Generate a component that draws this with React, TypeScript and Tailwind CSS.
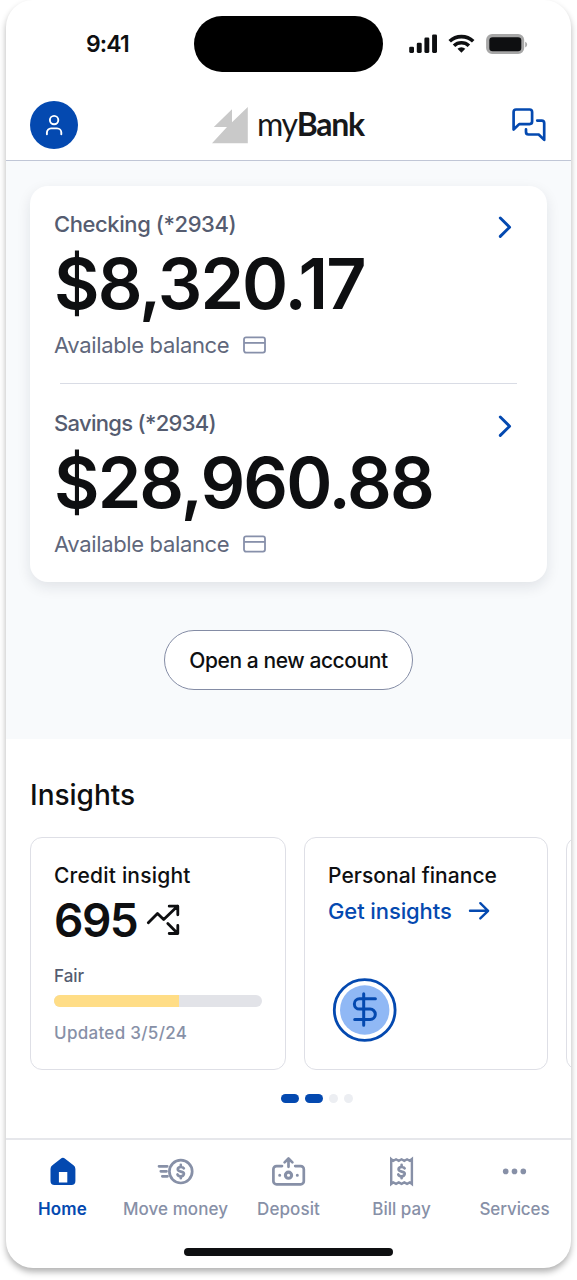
import { ReactNode } from "react";

interface Account {
  name: string;
  balance: string;
  nameClass: string;
}

interface NavItem {
  label: string;
  icon: ReactNode;
  className: string;
}

const accounts: Account[] = [
  { name: "Checking (*2934)", balance: "$8,320.17", nameClass: "tracking-[-0.42px]" },
  { name: "Savings (*2934)", balance: "$28,960.88", nameClass: "tracking-[-0.7px]" },
];

// small dollar sign centred on the origin, shared by the nav icons
const DOLLAR =
  "M3.1-3.3C2.6-4.3 1.5-4.7 0-4.7c-1.9 0-3.1 1-3.1 2.4C-3.1 1 3.2-.9 3.2 2.3 3.2 3.8 1.9 4.7 0 4.7c-1.7 0-2.9-.6-3.4-1.8M0-6.8v2.1M0 4.7v2.1";

const navItems: NavItem[] = [
  {
    label: "Home",
    className: "text-[#0449b0] font-semibold tracking-[0.2px]",
    icon: (
      <svg width="36" height="32" viewBox="0 0 36 32">
        <path
          fill="currentColor"
          fillRule="evenodd"
          d="M15.7 2.7a3.6 3.6 0 0 1 4.4 0l8.4 6.5a4.6 4.6 0 0 1 1.9 3.7v12.2a4 4 0 0 1-4 4H9.5a4 4 0 0 1-4-4V12.9a4.6 4.6 0 0 1 1.9-3.7zM13.9 15.9v10.6h8.4V15.9z"
        />
      </svg>
    ),
  },
  {
    label: "Move money",
    className: "text-[#8790a7] font-medium tracking-[0.05px]",
    icon: (
      <svg width="38" height="32" viewBox="0 0 38 32" fill="none" stroke="currentColor" strokeWidth="2.7" strokeLinecap="round">
        <circle cx="23.8" cy="15.6" r="11.4" />
        <path d="M2 10.3h8.2M3.8 15.3h5.7M5.3 20.3h5.2" />
        <path transform="translate(23.8 15.6) scale(.98)" d={DOLLAR} />
      </svg>
    ),
  },
  {
    label: "Deposit",
    className: "text-[#8790a7] font-medium tracking-[0.1px]",
    icon: (
      <svg width="36" height="32" viewBox="0 0 36 32" fill="none" stroke="currentColor" strokeWidth="2.7" strokeLinecap="round" strokeLinejoin="round">
        <path d="M11 10.1H5.5a3.1 3.1 0 0 0-3.1 3.1v12a3.1 3.1 0 0 0 3.1 3.1h24.2a3.1 3.1 0 0 0 3.1-3.1v-12a3.1 3.1 0 0 0-3.1-3.1h-5.5M17.5 10.8V2.6M13.6 6.4l3.9-3.9 3.9 3.9" />
        <circle cx="17.5" cy="19.2" r="3.1" strokeWidth="3.1" />
        <path strokeWidth="3" d="M8.7 19.2h.01M26.3 19.2h.01" />
      </svg>
    ),
  },
  {
    label: "Bill pay",
    className: "text-[#8790a7] font-medium",
    icon: (
      <svg width="36" height="32" viewBox="0 0 36 32" fill="none" stroke="currentColor" strokeWidth="2.4">
        <path d="M7.2 3.1l2.1 1.7 2.75-1.5 2.75 1.5 2.75-1.5 2.75 1.5 2.75-1.5 2.75 1.5 2.1-1.7v25l-2.1-1.7-2.75 1.5-2.75-1.5-2.75 1.5-2.75-1.5-2.75 1.5-2.75-1.5-2.1 1.7z" />
        <path transform="translate(17.6 15.6) scale(.98)" strokeWidth="2.7" strokeLinecap="round" d={DOLLAR} />
      </svg>
    ),
  },
  {
    label: "Services",
    className: "text-[#8790a7] font-medium tracking-[-0.1px]",
    icon: (
      <svg width="36" height="32" viewBox="0 0 36 32" fill="currentColor">
        <circle cx="8.7" cy="15.4" r="2.8" />
        <circle cx="17.5" cy="15.4" r="2.8" />
        <circle cx="26.3" cy="15.4" r="2.8" />
      </svg>
    ),
  },
];

function StatusBar() {
  return (
    <div className="flex h-[88px] items-start">
      <div className="w-[188px] pt-[30px] pl-[80px] text-[23px] leading-7 font-semibold tracking-[-0.9px]">9:41</div>
      <div className="mt-4 h-[56px] w-[189px] rounded-full bg-black" />
      <svg className="mt-[33px] ml-[26px]" width="120" height="22" viewBox="409 33 120 22">
        <g fill="#0e0f11">
          <rect x="409.2" y="46.7" width="4.8" height="6.2" rx="1.3" />
          <rect x="416.8" y="42.8" width="4.9" height="10.1" rx="1.3" />
          <rect x="424.4" y="37.6" width="4.9" height="15.3" rx="1.3" />
          <rect x="432.1" y="34.4" width="4.9" height="18.5" rx="1.3" />
          <path d="M461.4 52.7l-3.9-3.9a5.6 5.6 0 0 1 7.8 0z" />
        </g>
        <path d="M449.7 41.3a17 17 0 0 1 23.5 0M454 45.8a10.8 10.8 0 0 1 14.9 0" fill="none" stroke="#0e0f11" strokeWidth="3.6" />
        <rect x="487.3" y="35.3" width="35.7" height="17.5" rx="4.8" fill="#a7a7a7" stroke="#a7a7a7" strokeWidth="2.4" />
        <rect x="489.3" y="37.3" width="32" height="14" rx="3.3" fill="#0e0f11" />
        <path d="M525.2 41.8c2.6 1.2 2.6 4.4 0 5.6z" fill="#a7a7a7" />
      </svg>
    </div>
  );
}

function Header() {
  return (
    <header className="flex h-[73px] items-start border-b border-[#c0c6d6] pl-6">
      <div className="mt-[13px] flex size-12 items-center justify-center rounded-full bg-[#0449b0]">
        <svg width="24" height="24" viewBox="0 0 24 24" fill="none" stroke="#fff" strokeWidth="1.9" strokeLinecap="round">
          <circle cx="12.1" cy="7.1" r="4.2" />
          <path d="M4.9 21.3v-1.7a4.2 4.2 0 0 1 4.2-4.2h6a4.2 4.2 0 0 1 4.2 4.2v1.7" />
        </svg>
      </div>
      <div className="mt-[15px] ml-[134px] flex w-[300px] items-center">
        <svg className="mt-[2px]" width="36" height="37" viewBox="212 107 36 37" fill="#c9c9c9">
          <path d="M213.8 127L232 109.2v13L247.8 107v36.3H212L227 127z" />
        </svg>
        <div className="ml-[9px] text-[32px] leading-[42px] tracking-[-1.3px] text-[#17181a] font-['Lato',sans-serif]">
          my<span className="font-bold">Bank</span>
        </div>
      </div>
      <svg className="mt-5" width="34" height="34" viewBox="0 0 34 34" fill="none" stroke="#0449b0" strokeWidth="2.7" strokeLinecap="round" strokeLinejoin="round">
        <path d="M1.6 21.5V4a2.5 2.5 0 0 1 2.5-2.5h13.5A2.5 2.5 0 0 1 20.1 4v9.6a2.5 2.5 0 0 1-2.5 2.5H7.2z" />
        <path d="M25.2 12.6h4.5a2.5 2.5 0 0 1 2.5 2.5v16.8l-5.5-5.4H16.5A2.5 2.5 0 0 1 14 24v-2.6" />
      </svg>
    </header>
  );
}

function AccountRow({ account }: { account: Account }) {
  return (
    <div className="flex h-[149px] justify-between pr-[11px]">
      <div>
        <div className={`text-[22px] leading-[30px] font-medium text-[#555c70] ${account.nameClass}`}>{account.name}</div>
        <div className="mt-[2px] h-[84px] text-[70px] leading-[85px] font-semibold tracking-[-1.9px] whitespace-nowrap">
          {account.balance}
        </div>
        <div className="mt-[5px] flex items-center text-[22px] leading-[30px] text-[#60677b]">
          <span className="w-[189px] tracking-[-0.35px] whitespace-nowrap">Available balance</span>
          <svg width="23" height="18" viewBox="0 0 23 18" fill="none" stroke="#8790aa" strokeWidth="1.8">
            <rect x="1" y="1.4" width="21" height="15.2" rx="2" />
            <path d="M1 6.9h21" />
          </svg>
        </div>
      </div>
      <svg className="mt-[7px]" width="14" height="22" viewBox="0 0 14 22" fill="none" stroke="#0449b0" strokeWidth="2.9" strokeLinecap="round" strokeLinejoin="round">
        <path d="M2.3 2l9.3 9.2-9.3 9.2" />
      </svg>
    </div>
  );
}

function CreditCard() {
  return (
    <div className="h-[233px] w-[256px] shrink-0 rounded-xl border border-[#dedfe6] px-[23px] pt-[23px]">
      <h3 className="text-[21px] leading-[30px] font-medium tracking-[0.2px]">Credit insight</h3>
      <div className="mt-[1px] flex h-[56px] items-center">
        <span className="w-[92px] text-[46px] leading-[56px] font-semibold tracking-[-1.5px]">695</span>
        <svg width="34" height="34" viewBox="146 903 34 34" fill="none" stroke="#0e0f11" strokeWidth="2.8" strokeLinecap="round" strokeLinejoin="round">
          <path d="M148.3 922.8l9.2-9.4 6.2 6.2 14-13.5M169.2 906.2h8.6v8.6M167.8 923.5l9.9 9.9M177.8 925.5v8h-8.6" />
        </svg>
      </div>
      <div className="mt-4 text-[17px] leading-6 font-medium text-[#555c70]">Fair</div>
      <div className="mt-[7px] h-3 overflow-hidden rounded-full bg-[#e2e3e8]">
        <div className="h-full w-[60%] bg-[#ffdd86]" />
      </div>
      <div className="mt-[14px] text-[17px] leading-6 font-medium tracking-[0.3px] text-[#8790a7]">Updated 3/5/24</div>
    </div>
  );
}

function FinanceCard() {
  return (
    <div className="h-[233px] w-[244px] shrink-0 rounded-xl border border-[#dedfe6] px-[23px] pt-[23px]">
      <h3 className="text-[21px] leading-[30px] font-medium tracking-[0.05px]">Personal finance</h3>
      <a href="#" className="mt-[5px] flex items-center text-[22px] leading-[30px] font-medium text-[#0449b0]">
        <span className="w-[140px] tracking-[-0.1px] whitespace-nowrap">Get insights</span>
        <svg width="22" height="20" viewBox="0 0 22 20" fill="none" stroke="currentColor" strokeWidth="2.4" strokeLinecap="round" strokeLinejoin="round">
          <path d="M2 9.8h18M12.3 2.2l7.8 7.6-7.8 7.6" />
        </svg>
      </a>
      <svg className="mt-[52px] ml-1" width="65" height="64" viewBox="-32.7 -32 65 64" fill="none" stroke="#0449b0" strokeWidth="2.8" strokeLinecap="round">
        <circle r="30.4" fill="#fff" />
        <circle r="24.7" fill="#90b8f5" stroke="none" />
        <path strokeWidth="3" d="M-1-16.2v31.5M10.7-11.2H-5.2a5.15 5.15 0 0 0 0 10.3H5.4a5.2 5.2 0 0 1 0 10.4H-10" />
      </svg>
    </div>
  );
}

export default function App() {
  return (
    <div className="h-[1280px] w-[577px] overflow-hidden bg-white pl-[6px] text-[#0e0f11] font-['Inter',sans-serif]">
      <div className="flex h-[1268px] w-[565px] flex-col overflow-hidden rounded-[27px] bg-white shadow-[0_4px_6px_rgba(0,0,0,0.3)]">
        <StatusBar />
        <Header />

        <section className="h-[578px] bg-[#f8fafc] px-6 pt-[25px]">
          <div className="h-[396px] w-[517px] rounded-[18px] bg-white px-6 pt-[23px] shadow-[0_5px_14px_rgba(20,30,50,0.1)]">
            <AccountRow account={accounts[0]} />
            <div className="mx-[6px] mt-[25px] mb-6 h-px bg-[#d9dce5]" />
            <AccountRow account={accounts[1]} />
          </div>
          <button className="mx-auto mt-12 flex h-[60px] w-[249px] items-center justify-center rounded-full border border-[#848ca5] bg-white pt-[2px] text-[21px] font-medium tracking-[-0.42px] whitespace-nowrap">
            Open a new account
          </button>
        </section>

        <section className="h-[399px] pl-6">
          <h2 className="pt-[38px] text-[28px] leading-9 font-medium">Insights</h2>
          <div className="mt-6 flex gap-[18px] overflow-hidden">
            <CreditCard />
            <FinanceCard />
            <div className="h-[233px] w-[244px] shrink-0 rounded-xl border border-[#dedfe6]" />
          </div>
          <div className="mt-6 flex gap-[6px] pl-[251px]">
            <span className="h-[9px] w-[18px] rounded-full bg-[#0449b0]" />
            <span className="h-[9px] w-[18px] rounded-full bg-[#0449b0]" />
            <span className="size-[9px] rounded-full bg-[#eceef2]" />
            <span className="size-[9px] rounded-full bg-[#eceef2]" />
          </div>
        </section>

        <nav className="flex h-[110px] border-t-2 border-[#e6e7eb] pt-4">
          {navItems.map((item) => (
            <a key={item.label} href="#" className={`flex w-[113px] flex-col items-center text-[17px] ${item.className}`}>
              {item.icon}
              <span className="mt-[9px] leading-6 whitespace-nowrap">{item.label}</span>
            </a>
          ))}
        </nav>
        <div className="mx-auto h-2 w-[209px] rounded-full bg-[#0e0f11]" />
      </div>
    </div>
  );
}
